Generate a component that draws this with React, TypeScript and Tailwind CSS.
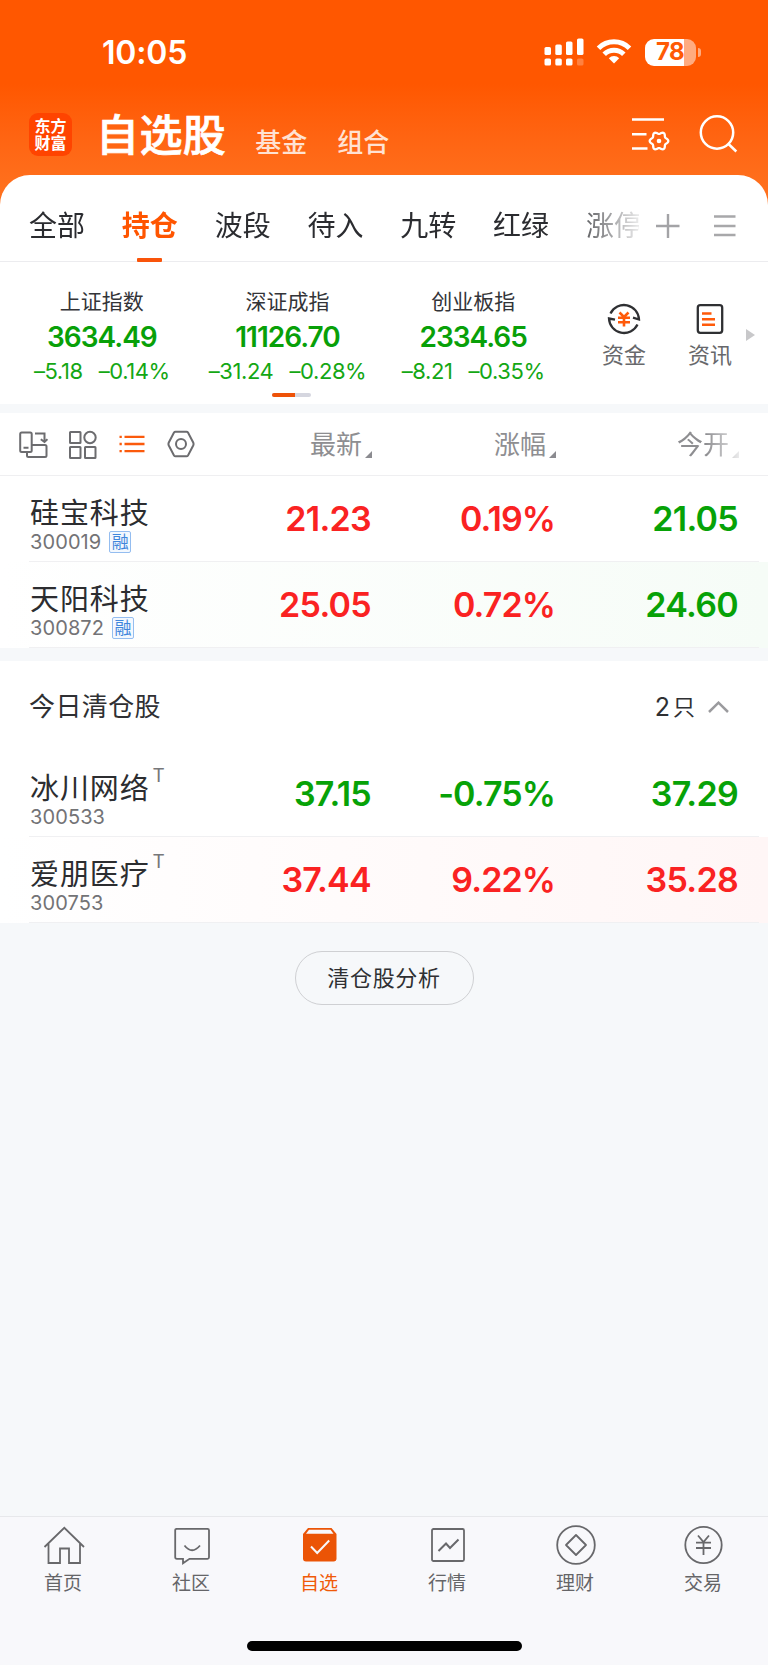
import type { ReactNode } from 'react';

const tabs = ['全部', '持仓', '波段', '待入', '九转', '红绿', '涨停'];

const indices = [
  { name: '上证指数', value: '3634.49', change: '–5.18', percent: '–0.14%' },
  { name: '深证成指', value: '11126.70', change: '–31.24', percent: '–0.28%' },
  { name: '创业板指', value: '2334.65', change: '–8.21', percent: '–0.35%' },
];

type Stock = {
  name: string;
  code: string;
  margin?: boolean;
  traded?: boolean;
  last: string;
  percent: string;
  open: string;
  up: boolean;
  openUp: boolean;
  tint?: string;
};

const holdings: Stock[] = [
  { name: '硅宝科技', code: '300019', margin: true, last: '21.23', percent: '0.19%', open: '21.05', up: true, openUp: false },
  { name: '天阳科技', code: '300872', margin: true, last: '25.05', percent: '0.72%', open: '24.60', up: true, openUp: false, tint: 'bg-linear-to-r from-white to-[#f6fcf7]' },
];

const cleared: Stock[] = [
  { name: '冰川网络', code: '300533', traded: true, last: '37.15', percent: '-0.75%', open: '37.29', up: false, openUp: false },
  { name: '爱朋医疗', code: '300753', traded: true, last: '37.44', percent: '9.22%', open: '35.28', up: true, openUp: true, tint: 'bg-linear-to-r from-white to-[#fff6f6]' },
];

// six-lobed outline of the settings gear
const gearPoints = Array.from({ length: 72 }, (_, i) => {
  const angle = (i * Math.PI) / 36;
  const radius = 8.2 + 1.1 * Math.cos(6 * angle);
  return `${(29 + radius * Math.cos(angle)).toFixed(2)},${(27 + radius * Math.sin(angle)).toFixed(2)}`;
}).join(' ');

const StatusBar = () => {
  return (
    <div className="flex h-[104px] items-center justify-between pl-[102px] pr-[67px] text-white">
      <span className="mt-[2px] text-[32px] font-semibold leading-8 tracking-[-0.2px]">10:05</span>
      <div className="flex items-center">
        <svg width="40" height="28" viewBox="0 0 40 28" fill="white">
          <rect x="0.5" y="9" width="6.5" height="8" rx="1.6" />
          <rect x="11.3" y="6.5" width="6.5" height="10.5" rx="1.6" />
          <rect x="22" y="3.5" width="6.5" height="13.5" rx="1.6" />
          <rect x="33" y="0.5" width="6.5" height="16.5" rx="1.6" />
          <rect x="0.5" y="20.5" width="6.5" height="7" rx="1.6" />
          <rect x="11.3" y="20.5" width="6.5" height="7" rx="1.6" />
          <rect x="22" y="20.5" width="6.5" height="7" rx="1.6" />
          <rect x="33" y="20.5" width="6.5" height="7" rx="1.6" opacity="0.25" />
        </svg>
        <svg className="ml-[12px]" width="36" height="28" viewBox="0 0 36 28" fill="none" stroke="white" strokeWidth="5">
          <path d="M2.500 10.200a22 22 0 0 1 31 0" />
          <path d="M8.200 16.300a14 14 0 0 1 19.600 0" />
          <path d="M18 25.500l-5.200-5.300a7.400 7.400 0 0 1 10.400 0z" fill="white" stroke="none" />
        </svg>
        <div className="ml-[13px] flex h-[27px] w-[51px] items-center justify-center overflow-hidden rounded-[9px] bg-linear-to-r from-white from-77% to-[#ffab80] to-77%">
          <span className="-ml-[1px] text-[24px] font-bold leading-none tracking-[-0.6px] text-[#ff5a05]">78</span>
        </div>
        <div className="ml-[2px] h-[9px] w-[3px] rounded-r-full bg-[#ffab80]" />
      </div>
    </div>
  );
};

const Header = () => {
  return (
    <div className="flex h-[71px] text-white">
      <div className="ml-[29px] mt-[9px] flex h-[43px] w-[43px] items-center justify-center rounded-[9px] bg-[#ff4400]">
        <span className="-mt-px w-[32px] font-['Noto_Sans_CJK_SC',sans-serif] text-[16px] font-bold leading-[17px]">东方财富</span>
      </div>
      <h1 className="ml-[24px] mt-[5px] text-[43px] font-medium leading-[52px] tracking-[0.4px] [-webkit-text-stroke:0.7px_white]">自选股</h1>
      <span className="ml-[29px] mt-[21px] text-[26px] font-medium leading-[36px] text-[#ffe2d3]">基金</span>
      <span className="ml-[30px] mt-[21px] text-[26px] font-medium leading-[36px] text-[#ffe2d3]">组合</span>
      <div className="ml-auto mr-[30px] mt-[10px] flex gap-[28px]">
        <svg width="40" height="40" viewBox="0 0 40 40" fill="none" stroke="white" strokeWidth="2.5">
          <path d="M2 5.500h32M2 20.200h14.500M2 34.500h15.500" />
          <polygon points={gearPoints} strokeWidth="2.300" />
          <circle cx="29" cy="27" r="2.300" fill="white" stroke="none" />
        </svg>
        <svg width="40" height="40" viewBox="0 0 40 40" fill="none" stroke="white" strokeWidth="2.500">
          <circle cx="19" cy="18.500" r="16.200" />
          <path d="M30 29.500l8.300 8" />
        </svg>
      </div>
    </div>
  );
};

const Tabs = () => {
  return (
    <div className="flex h-[87px] border-b border-[#ececef]">
      <div className="-mb-px ml-[29px] flex w-[610px] gap-[36.8px] overflow-hidden [mask-image:linear-gradient(to_right,black_535px,transparent_618px)]">
        {tabs.map((tab) => (
          <div key={tab} className="flex shrink-0 flex-col items-center">
            <span
              className={
                tab === '持仓'
                  ? 'mt-[31px] text-[28px] font-bold leading-[40px] text-[#ff5500]'
                  : 'mt-[31px] text-[28px] leading-[40px] text-[#2b2c30]'
              }
            >
              {tab}
            </span>
            {tab === '持仓' && <div className="mt-auto h-[4px] w-[25px] rounded-[1px] bg-[#f9540a]" />}
          </div>
        ))}
      </div>
      <svg className="ml-[17px] mt-[39px]" width="24" height="24" viewBox="0 0 24 24" stroke="#a3a3a6" strokeWidth="2.400">
        <path d="M0 12h23.500M12 0v24" />
      </svg>
      <svg className="ml-[33px] mt-[39px]" width="24" height="24" viewBox="0 0 24 24" stroke="#a8a8aa" strokeWidth="2.400">
        <path d="M1 2.500h21.500M1 12h21.500M1 21h21.500" />
      </svg>
    </div>
  );
};

const IndexBar = () => {
  return (
    <div className="flex h-[142px]">
      <div className="ml-[9px] flex w-[557px] flex-col">
        <div className="mt-[26px] grid grid-cols-3">
          {indices.map((item) => (
            <div key={item.name} className="flex flex-col items-center">
              <span className="text-[21px] leading-[28px] text-[#333438]">{item.name}</span>
              <span className="mt-[4px] text-[28px] font-semibold leading-[34px] tracking-[-1px] text-[#08a008]">{item.value}</span>
              <div className="mt-[3px] flex gap-[16px] text-[22px] leading-[28px] tracking-[-0.4px] text-[#14a714]">
                <span>{item.change}</span>
                <span>{item.percent}</span>
              </div>
            </div>
          ))}
        </div>
        <div className="ml-[263px] mt-[8px] flex h-[4px] w-[39px] overflow-hidden rounded-full bg-[#d5d6df]">
          <div className="w-[23px] bg-[#ee5208]" />
        </div>
      </div>
      <div className="ml-[35px] mt-[40px] flex w-[46px] flex-col items-center">
        <svg width="34" height="34" viewBox="0 0 34 34" fill="none" stroke="#2f3033" strokeWidth="2.300">
          <path d="M3.500 11.500A15 15 0 0 1 32 17.500l-6-1.800" />
          <path d="M30.500 22.500A15 15 0 0 1 2 16.500l6 1.200" />
          <path d="M12.500 10.500l4.500 4.500 4.500-4.500M11 15.800h12M11 20.200h12M17 15v9.500" stroke="#ff5a0a" strokeWidth="2.600" />
        </svg>
        <span className="mt-[4px] text-[22px] leading-[30px] text-[#67686b]">资金</span>
      </div>
      <div className="ml-[40px] mt-[40px] flex w-[46px] flex-col items-center">
        <svg width="28" height="34" viewBox="0 0 28 34" fill="none" stroke="#2f3033" strokeWidth="2.300">
          <rect x="1.800" y="3.200" width="24.400" height="27.600" rx="2.500" />
          <path d="M6 11.500h9.500M6 17.300h13M6 22.800h13" stroke="#ff5a0a" strokeWidth="2.600" />
        </svg>
        <span className="mt-[4px] text-[22px] leading-[30px] text-[#67686b]">资讯</span>
      </div>
      <svg className="ml-[13px] mt-[67px]" width="10" height="12" viewBox="0 0 10 12" fill="#c8c8ca">
        <path d="M0 0l9 6-9 6z" />
      </svg>
    </div>
  );
};

const SortLabel = ({ children, className }: { children: ReactNode; className: string }) => {
  return (
    <div className={className}>
      <span className="-mb-px text-[26px] leading-[36px] text-[#8e8e91]">{children}</span>
      <svg className="mb-[4px] ml-[3px]" width="7" height="7" viewBox="0 0 7 7" fill="#8b8b90">
        <path d="M7 0v7H0z" />
      </svg>
    </div>
  );
};

const Toolbar = () => {
  return (
    <div className="flex h-[63px] items-center border-b border-[#efeff1]">
      <svg className="ml-[19px] mt-px" width="29" height="28" viewBox="0 0 29 28" fill="none" stroke="#6c6c6f" strokeWidth="2">
        <rect x="1.200" y="1.500" width="11.500" height="19.500" rx="1.500" />
        <path d="M4.500 16.700h5M16 2.500h9.500v8M21.800 8.200l3.700 2.800 3-2.800" />
        <path d="M12.700 14H26a1.500 1.500 0 0 1 1.500 1.500v9a1.500 1.500 0 0 1-1.500 1.500H9.500a1.500 1.500 0 0 1-1.500-1.500v-3.500" />
      </svg>
      <svg className="ml-[20px] mt-px" width="30" height="30" viewBox="0 0 30 30" fill="none" stroke="#6c6c6f" strokeWidth="2">
        <rect x="2" y="2" width="10.500" height="11" rx="0.500" />
        <circle cx="22" cy="7.500" r="5.700" />
        <rect x="2" y="17" width="10.500" height="11" rx="0.500" />
        <rect x="17" y="17" width="10.500" height="11" rx="0.500" />
      </svg>
      <svg className="ml-[21px]" width="26" height="20" viewBox="0 0 26 20" stroke="#fb5a0c" strokeWidth="2.300">
        <path d="M0.500 2.800h2.300M5.500 2.800H25.500M0.500 10h2.300M5.500 10H25.500M0.500 17.200h2.300M5.500 17.200H25.500" />
      </svg>
      <svg className="ml-[22px]" width="28" height="28" viewBox="0 0 28 28" fill="none" stroke="#6c6c6f" strokeWidth="2">
        <path d="M8.500 1.700h11q1 0 1.500.8l5.200 10q.7 1.500 0 3l-5.200 10q-.5.800-1.500.8h-11q-1 0-1.500-.8l-5.200-10q-.7-1.500 0-3l5.200-10q.5-.8 1.500-.8z" />
        <circle cx="14" cy="14" r="5" />
      </svg>
      <div className="ml-auto mr-[29px] flex">
        <SortLabel className="flex w-[160px] items-end justify-end">最新</SortLabel>
        <SortLabel className="flex w-[184px] items-end justify-end">涨幅</SortLabel>
        <SortLabel className="flex w-[183px] items-end justify-end [mask-image:linear-gradient(to_right,black_150px,transparent_190px)]">今开</SortLabel>
      </div>
    </div>
  );
};

const StockRow = ({ stock }: { stock: Stock }) => {
  const color = stock.up ? 'text-[#fa2222]' : 'text-[#07a207]';
  const openColor = stock.openUp ? 'text-[#fa2222]' : 'text-[#07a207]';

  return (
    <div className={`h-[86px] ${stock.tint ?? 'bg-white'}`}>
      <div className="ml-[29px] mr-[9px] flex h-full border-b border-[#f0f0f2]">
        <div className="flex w-[158px] flex-col pl-px">
          <div className="mt-[18px] flex h-[38px]">
            <span className="text-[29px] leading-[40px] tracking-[0.9px] text-[#2c2d30]">{stock.name}</span>
            {stock.traded && <span className="-mt-[3px] ml-[3px] text-[19px] leading-[20px] text-[#77777a]">T</span>}
          </div>
          <div className="-mt-px flex items-center">
            <span className="text-[20px] leading-[22px] tracking-[0.1px] text-[#737376]">{stock.code}</span>
            {stock.margin && (
              <span className="ml-[8px] flex h-[22px] w-[22px] items-center justify-center rounded-[2px] border border-[#94bdf0] bg-[#f3f8fe] text-[17px] leading-none text-[#3f86dc]">
                融
              </span>
            )}
          </div>
        </div>
        <span className={`mt-[22px] w-[184px] text-right text-[34px] font-semibold leading-[42px] tracking-[-0.7px] ${color}`}>{stock.last}</span>
        <span className={`mt-[22px] w-[184px] text-right text-[34px] font-semibold leading-[42px] tracking-[-0.9px] ${color}`}>{stock.percent}</span>
        <span className={`mt-[22px] w-[183px] text-right text-[34px] font-semibold leading-[42px] tracking-[-0.7px] ${openColor}`}>{stock.open}</span>
      </div>
    </div>
  );
};

const NavItem = ({ label, active, children }: { label: string; active?: boolean; children: ReactNode }) => {
  return (
    <div className="flex flex-1 flex-col items-center pt-[7px]">
      <svg width="42" height="42" viewBox="0 0 42 42" fill="none" stroke="#68686b" strokeWidth="1.800">
        {children}
      </svg>
      <span
        className={
          active
            ? 'mr-[2px] mt-[5px] text-[19px] leading-[26px] text-[#f05a08]'
            : 'mr-[2px] mt-[5px] text-[19px] leading-[26px] text-[#656568]'
        }
      >
        {label}
      </span>
    </div>
  );
};

const BottomNav = () => {
  return (
    <div className="mt-auto flex h-[149px] flex-col border-t border-[#e7e8eb] bg-[#f8f8fb]">
      <div className="flex">
        <NavItem label="首页">
          <path d="M1.500 23L21.300 3.800 41 23M5.500 19.500v19.500h11.500V24.500h9v14.500h11V19.500" />
        </NavItem>
        <NavItem label="社区">
          <path d="M5 4.800h31.500q1.500 0 1.500 1.500v27q0 1.500-1.500 1.500H18.500l-6.500 4.500v-4.500H6q-1.800 0-1.800-1.500V6.300q0-1.500 1.500-1.500z" />
          <path d="M13.500 21.500q7.500 9.500 15.500 0" />
        </NavItem>
        <NavItem label="自选" active>
          <path d="M9 4h23.500l5 6v24.500q0 3-3 3h-27.500q-3 0-3-3V10z" fill="#eb5406" stroke="none" />
          <path d="M10 5.700h21.500l3 4H7z" fill="#f8f8fb" stroke="none" />
          <path d="M12 22.500l6.200 6.500 12-12.500" stroke="#f8f8fb" strokeWidth="2" />
        </NavItem>
        <NavItem label="行情">
          <rect x="5" y="5" width="32" height="32" rx="1.500" />
          <path d="M11.500 27l7.500-7.500 4 4.500 8.500-8.500" strokeWidth="2" />
        </NavItem>
        <NavItem label="理财">
          <circle cx="21" cy="21" r="18.800" />
          <path d="M21 11l10 10-10 10-10-10z" strokeLinejoin="round" />
        </NavItem>
        <NavItem label="交易">
          <circle cx="20.500" cy="21" r="18.200" />
          <path d="M15 11.500l5.500 6.500 5.500-6.500M13 18.700h15M13 24h15M20.500 18v13" />
        </NavItem>
      </div>
      <div className="mx-auto mb-[14px] mt-auto h-[10px] w-[275px] rounded-full bg-black" />
    </div>
  );
};

const App = () => {
  return (
    <div className="flex h-[1665px] w-[768px] flex-col overflow-hidden bg-[#f6f8fa] font-['Inter','Noto_Sans_CJK_SC',sans-serif]">
      <div className="bg-linear-to-b from-[#ff5700] from-32% to-[#ff701d] to-72%">
        <StatusBar />
        <Header />
        <div className="rounded-t-[30px] bg-white">
          <Tabs />
        </div>
      </div>

      <div className="bg-white">
        <IndexBar />
      </div>

      <div className="mt-[9px] bg-white">
        <Toolbar />
        {holdings.map((stock) => (
          <StockRow key={stock.code} stock={stock} />
        ))}
      </div>

      <div className="mt-[13px] bg-white">
        <div className="flex h-[90px] items-center pl-[29px] pr-[39px] pt-[2px] text-[#2f3033]">
          <span className="text-[26px] leading-[36px] tracking-[0.4px]">今日清仓股</span>
          <span className="ml-auto text-[25px] leading-[36px]">2</span>
          <span className="ml-[3px] text-[22px] leading-[36px]">只</span>
          <svg className="ml-[13px]" width="21" height="12" viewBox="0 0 21 12" fill="none" stroke="#9b9b9e" strokeWidth="2.500">
            <path d="M1 11l9.500-9.300L20 11" />
          </svg>
        </div>
        {cleared.map((stock) => (
          <StockRow key={stock.code} stock={stock} />
        ))}
      </div>

      <button className="mx-auto mt-[28px] h-[54px] w-[179px] rounded-full border border-[#cfd0d3] text-[22px] tracking-[0.7px] text-[#2f3033]">
        清仓股分析
      </button>

      <BottomNav />
    </div>
  );
};

export default App;
